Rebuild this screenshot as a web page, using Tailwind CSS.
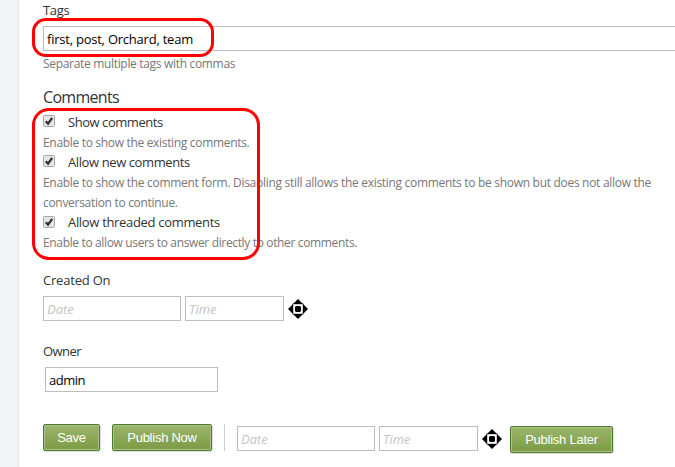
<!DOCTYPE html>
<html lang="en">
<head>
<meta charset="utf-8">
<title>Edit content</title>
<script src="https://cdn.jsdelivr.net/npm/@tailwindcss/browser@4"></script>
</head>
<body class="bg-white">
<svg class="hidden">
  <symbol id="check" viewBox="0 0 12 12">
    <rect x=".5" y=".5" width="11" height="11" rx="1" fill="#e6e6e6" stroke="#a6a6a6"/>
    <path d="M2.8 6.3 5 8.6 9.2 2.9" fill="none" stroke="#333" stroke-width="2.3"/>
  </symbol>
  <symbol id="picker" viewBox="0 0 20 20">
    <path d="M10 0 20 10 10 20 0 10Z" fill="#000"/>
    <path d="M4.6 4.6H15.4V15.4H4.6Z" fill="#000"/>
    <path d="M5.2 5.2H14.8V14.8H5.2Z" fill="#fff"/>
    <path d="M8 7H12L13 8V12L12 13H8L7 12V8Z" fill="#000"/>
  </symbol>
</svg>
<div class="relative flex h-[467px] w-[675px] overflow-hidden bg-white font-['Open_Sans','Noto_Sans',sans-serif] text-[13px] tracking-[-0.32px] text-[#333]">
  <aside class="w-[19px] shrink-0 border-r border-[#e4e5e6] bg-[#f3f4f5]"></aside>
  <main class="w-[656px] shrink-0 pl-6 whitespace-nowrap">
    <div class="h-[26px] leading-5"><label>Tags</label></div>
    <div class="flex h-[25px] w-[640px] items-center border border-[#bdbdbd] pt-0.5 pl-[3px] tracking-[-0.23px] text-black"><span>first, post, Orchard, team</span></div>
    <div class="h-[32px] text-xs leading-[26px] text-[#777]"><span>Separate multiple tags with commas</span></div>
    <h2 class="h-[29px] text-base leading-7 tracking-[-0.7px]"><span>Comments</span></h2>
    <div class="flex h-5 items-center gap-[13px]"><svg class="mb-[2px] size-3"><use href="#check"/></svg><span class="pt-0.5 tracking-[-0.45px]">Show comments</span></div>
    <div class="h-5 text-xs leading-[22px] text-[#777]"><span>Enable to show the existing comments.</span></div>
    <div class="flex h-5 items-center gap-[13px]"><svg class="mb-[2px] size-3"><use href="#check"/></svg><span class="pt-0.5 tracking-[-0.4px]">Allow new comments</span></div>
    <div class="h-10 pt-px text-xs leading-5 tracking-[-0.3px] text-[#777]"><span>Enable to show the comment form. Disabling still allows the existing comments to be shown but does not allow the<br>conversation to continue.</span></div>
    <div class="flex h-5 items-center gap-[13px]"><svg class="mb-px size-3"><use href="#check"/></svg><span class="pt-0.5">Allow threaded comments</span></div>
    <div class="h-[38px] pt-px text-xs leading-5 tracking-[-0.35px] text-[#777]"><span>Enable to allow users to answer directly to other comments.</span></div>
    <div class="h-[26px] leading-5 tracking-[-0.2px]"><label>Created On</label></div>
    <div class="flex h-[25px] items-center gap-1 tracking-normal text-[#c4c4c4] italic">
      <div class="flex h-[25px] w-[138px] items-center border border-[#bdbdbd] pt-0.5 pl-[3px]">Date</div>
      <div class="flex h-[25px] w-[99px] items-center border border-[#bdbdbd] pt-0.5 pl-[3px]">Time</div>
      <svg class="mt-px size-5"><use href="#picker"/></svg>
    </div>
    <div class="mt-5 h-[26px] leading-5 tracking-[-0.55px]"><label>Owner</label></div>
    <div class="ml-0.5 flex h-[25px] w-[173px] items-center border border-[#bdbdbd] pt-0.5 pl-[3px] tracking-[-0.5px] text-black">admin</div>
    <div class="mt-8 flex h-[29px] items-start">
      <button class="h-[27px] w-[57px] rounded-[2px] border border-[#4b7a2b] bg-linear-to-b from-[#9bb56c] to-[#7c9b43] font-['Liberation_Sans',sans-serif] text-[13px] tracking-[-0.25px] text-white shadow-[inset_0_0_0_1px_#abc284,1px_1px_1px_#ddd]">Save</button>
      <button class="ml-3 h-[27px] w-[100px] rounded-[2px] border border-[#4b7a2b] bg-linear-to-b from-[#9bb56c] to-[#7c9b43] font-['Liberation_Sans',sans-serif] text-[13px] tracking-[-0.25px] text-white shadow-[inset_0_0_0_1px_#abc284,1px_1px_1px_#ddd]">Publish Now</button>
      <div class="ml-3 h-[27px] w-px bg-[#ccc]"></div>
      <div class="mt-0.5 ml-3 flex h-[25px] items-center gap-1 tracking-normal text-[#c4c4c4] italic">
        <div class="flex h-[25px] w-[138px] items-center border border-[#bdbdbd] pt-0.5 pl-[3px]">Date</div>
        <div class="flex h-[25px] w-[99px] items-center border border-[#bdbdbd] pt-0.5 pl-[3px]">Time</div>
        <svg class="mt-px size-5"><use href="#picker"/></svg>
      </div>
      <button class="mt-0.5 ml-2 h-[27px] w-[103px] rounded-[2px] border border-[#4b7a2b] bg-linear-to-b from-[#9bb56c] to-[#7c9b43] font-['Liberation_Sans',sans-serif] text-[13px] tracking-[-0.25px] text-white shadow-[inset_0_0_0_1px_#abc284,1px_1px_1px_#ddd]">Publish Later</button>
    </div>
  </main>
  <div class="absolute top-[18px] left-8 h-[39px] w-[182px] rounded-[14px] border-3 border-[#f00]"></div>
  <div class="absolute top-[108px] left-8 h-[152px] w-[228px] rounded-[17px] border-3 border-[#f00]"></div>
</div>
</body>
</html>
